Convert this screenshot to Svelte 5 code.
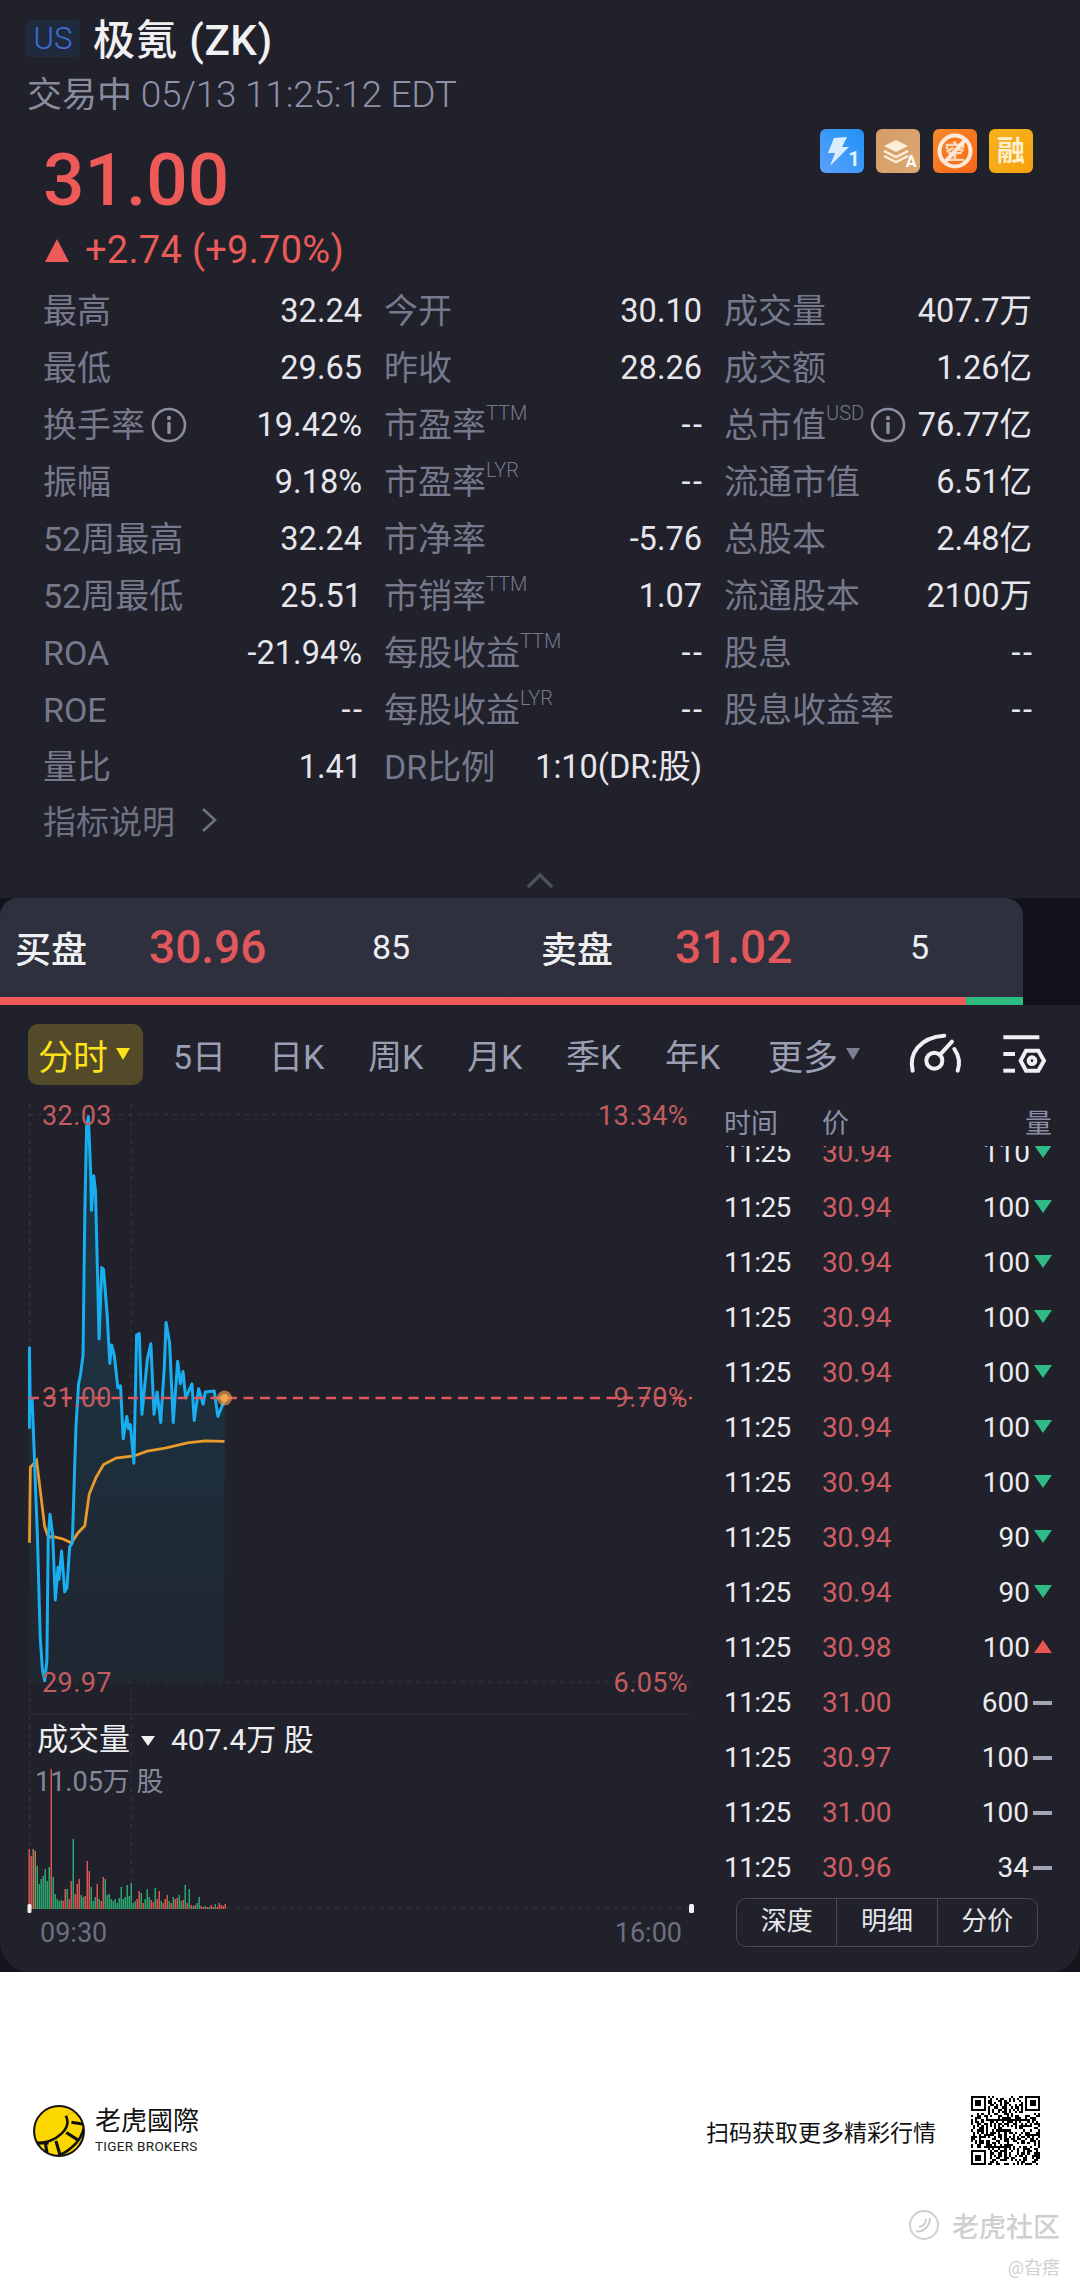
<script>
  const stats = [
    [["最高","32.24"],["今开","30.10"],["成交量","407.7万"]],
    [["最低","29.65"],["昨收","28.26"],["成交额","1.26亿"]],
    [["换手率","19.42%","",true],["市盈率","--","TTM"],["总市值","76.77亿","USD",true]],
    [["振幅","9.18%"],["市盈率","--","LYR"],["流通市值","6.51亿"]],
    [["52周最高","32.24"],["市净率","-5.76"],["总股本","2.48亿"]],
    [["52周最低","25.51"],["市销率","1.07","TTM"],["流通股本","2100万"]],
    [["ROA","-21.94%"],["每股收益","--","TTM"],["股息","--"]],
    [["ROE","--"],["每股收益","--","LYR"],["股息收益率","--"]],
    [["量比","1.41"],["DR比例","1:10(DR:股)"],null]
  ];
  const tabs = ["5日","日K","周K","月K","季K","年K"];
  const trades = [
    ["30.94","110","d"],["30.94","100","d"],["30.94","100","d"],["30.94","100","d"],["30.94","100","d"],
    ["30.94","100","d"],["30.94","100","d"],["30.94","90","d"],["30.94","90","d"],["30.98","100","u"],
    ["31.00","600","n"],["30.97","100","n"],["31.00","100","n"],["30.96","34","n"]
  ];
  const blue = "66,830 66,632 68,790 72,760 76,870 84,1100 90,1340 95,1420 100,1448 105,1400 108,1100 112,1040 118,1090 124,1250 130,1170 132,1200 138,1130 145,1230 150,1220 156,1120 162,1110 170,830 176,720 180,700 186,650 190,300 194,90 198,65 203,200 205,295 210,210 214,250 222,610 228,435 232,440 240,550 246,670 250,625 256,650 264,730 270,725 276,855 284,800 288,830 292,820 300,915 306,600 312,597 318,795 330,660 338,622 345,795 352,740 360,815 368,680 372,570 380,620 388,815 398,665 404,720 410,690 416,755 430,720 435,810 445,732 455,770 460,740 480,738 488,800 503,760";
  const orange = "66,1110 68,925 82,908 90,980 100,1070 108,1095 120,1095 140,1100 160,1110 175,1085 190,1068 200,990 215,950 232,918 260,902 300,897 330,885 370,878 420,865 460,860 503,861";
  const fill = "66,1450 " + blue + " 503,1450";
  const h = [60,53,60,58,43,25,30,33,40,28,42,140,32,15,10,8,9,8,20,20,10,28,70,15,25,30,14,12,13,48,38,22,8,12,25,10,8,32,30,14,15,10,8,10,6,11,22,10,12,24,13,26,6,8,10,18,16,6,10,20,12,9,7,21,10,18,8,6,10,14,8,6,12,10,11,14,8,9,24,6,20,4,3,4,6,12,3,2,3,2,2,4,2,5,2,6,4,3,5];
  const c = "rrttgggggggrgggggrrgrrgrrrggrrrgggrgrrggggggggggggggggrrgrgggrrgrrgrrrgrgrrggrgrgrgrggrrgrgrrgrr";
  const colors = { r: "#d8564f", g: "#2ca56f", t: "#a8805a" };
  const bars = h.map((v, i) => ({ x: 28.5 + i * 2, y: 819 - v, h: v, col: colors[c[i] || "r"] }));

  const N = 33;
  const qr = [];
  let seed = 7;
  const rnd = () => { seed = (seed * 1103515245 + 12345) & 0x7fffffff; return (seed >> 12) & 1; };
  const inFinder = (x, y) => (x < 8 && y < 8) || (x >= N - 8 && y < 8) || (x < 8 && y >= N - 8);
  for (let y = 0; y < N; y++) for (let x = 0; x < N; x++) if (!inFinder(x, y) && rnd()) qr.push([x, y]);
  const finders = [[0, 0], [N - 7, 0], [0, N - 7]];
</script>

<div class="page">
  <div class="panelback">
    <div class="panel">
      <div class="title">
        <span class="us">US</span>
        <span class="name">极氪 (ZK)</span>
      </div>
      <div class="status"><span class="cn">交易中</span> 05/13 11:25:12 EDT</div>
      <div class="pricerow">
        <div>
          <div class="price">31.00</div>
          <div class="change"><span class="up"></span>+2.74 (+9.70%)</div>
        </div>
        <div class="badges">
          <svg width="44" height="44" viewBox="0 0 44 44">
            <defs><linearGradient id="b1" x1="1" y1="0" x2="0" y2="1"><stop offset="0" stop-color="#1f93f5"/><stop offset="1" stop-color="#5aa0fb"/></linearGradient></defs>
            <rect width="44" height="44" rx="6" fill="url(#b1)"/>
            <path d="M14 9 L27 8 L22 18 L29 18 L10 37 L15 24 L8 24 Z" fill="#d8eeff"/>
            <text x="34" y="37" class="bt" font-size="20" fill="#e6f4ff" text-anchor="middle">1</text>
          </svg>
          <svg width="44" height="44" viewBox="0 0 44 44">
            <defs><linearGradient id="b2" x1="0" y1="0" x2="1" y2="1"><stop offset="0" stop-color="#d59c66"/><stop offset="1" stop-color="#dca872"/></linearGradient></defs>
            <rect width="44" height="44" rx="6" fill="url(#b2)"/>
            <path d="M20 11 L32 17 L20 23 L8 17 Z" fill="#fbeeda"/>
            <path d="M8 22 L20 28 L32 22 M8 27 L20 33 L32 27" fill="none" stroke="#fbeeda" stroke-width="2.5"/>
            <text x="35" y="38" class="bt" font-size="16" fill="#fff" text-anchor="middle">A</text>
          </svg>
          <svg width="44" height="44" viewBox="0 0 44 44">
            <defs><linearGradient id="b3" x1="0" y1="0" x2="1" y2="1"><stop offset="0" stop-color="#f48a2a"/><stop offset="1" stop-color="#f9641a"/></linearGradient></defs>
            <rect width="44" height="44" rx="6" fill="url(#b3)"/>
            <text x="22" y="30" class="cjk" font-size="21" fill="#fbd8b8" text-anchor="middle">空</text>
            <circle cx="22" cy="22" r="15.5" fill="none" stroke="#fdeadb" stroke-width="4"/>
            <line x1="12" y1="33" x2="32" y2="11" stroke="#fdeadb" stroke-width="4"/>
          </svg>
          <svg width="44" height="44" viewBox="0 0 44 44">
            <defs><linearGradient id="b4" x1="0" y1="0" x2="1" y2="1"><stop offset="0" stop-color="#f8b31c"/><stop offset="1" stop-color="#f5a010"/></linearGradient></defs>
            <rect width="44" height="44" rx="6" fill="url(#b4)"/>
            <text x="22" y="32" class="cjk" font-size="28" fill="#fff0cf" text-anchor="middle">融</text>
          </svg>
        </div>
      </div>

      <div class="stats">
        {#each stats as row}
          {#each row as cell}
            {#if cell}
              <div class="cell">
                <span class="label">{cell[0]}{#if cell[2]}<sup>{cell[2]}</sup>{/if}{#if cell[3]}<svg class="info" width="36" height="36" viewBox="0 0 36 36"><circle cx="18" cy="18" r="16" fill="none" stroke="#8b8d9f" stroke-width="2.6"/><circle cx="18" cy="11" r="2.2" fill="#8b8d9f"/><rect x="16.3" y="15" width="3.4" height="12" rx="1" fill="#8b8d9f"/></svg>{/if}</span>
                <span class="value" class:dash={cell[1] === "--"}>{cell[1]}</span>
              </div>
            {:else}
              <div></div>
            {/if}
          {/each}
        {/each}
      </div>

      <div class="explain">指标说明
        <svg width="20" height="28" viewBox="0 0 20 28"><path d="M4 3 L16 14 L4 25" fill="none" stroke="#6e7084" stroke-width="2.6"/></svg>
      </div>
      <div class="collapse">
        <svg width="28" height="18" viewBox="0 0 28 18"><path d="M2 16 L14 4 L26 16" fill="none" stroke="#4d4f5e" stroke-width="3.5"/></svg>
      </div>

      <div class="bidwrap">
        <div class="bidbox">
          <div class="side">
            <span class="bl">买盘</span><span class="bp">30.96</span><span class="bq">85</span>
          </div>
          <div class="side sell">
            <span class="bl">卖盘</span><span class="bp">31.02</span><span class="bq">5</span>
          </div>
          <div class="ratio"><div class="rr"></div><div class="rg"></div></div>
        </div>
      </div>

      <div class="tabs">
        <div class="chip">分时<span class="tri yellow"></span></div>
        {#each tabs as t}<span class="tab">{t}</span>{/each}
        <span class="tab more">更多<span class="tri grey"></span></span>
        <svg class="gauge" width="60" height="50" viewBox="50 30 180 150" fill="none" stroke="#f0f0f2" stroke-width="12" stroke-linecap="round">
          <path d="M70 155 C58 105 90 55 165 50"/>
          <circle cx="135" cy="125" r="24"/>
          <line x1="152" y1="107" x2="188" y2="68"/>
          <path d="M195 90 C212 115 212 135 205 155"/>
        </svg>
        <svg class="gear" width="50" height="50" viewBox="330 30 150 150" fill="none" stroke="#f0f0f2" stroke-width="12">
          <line x1="340" y1="55" x2="448" y2="55"/>
          <line x1="340" y1="105" x2="375" y2="105"/>
          <line x1="340" y1="155" x2="375" y2="155"/>
          <path d="M392 125 L408 95 L445 95 L462 125 L445 155 L408 155 Z"/>
          <circle cx="426" cy="125" r="10"/>
        </svg>
      </div>

      <div class="main">
        <svg class="chart" width="700" height="882" viewBox="0 0 700 882">
          <defs>
            <linearGradient id="area" x1="0" y1="0" x2="0" y2="1">
              <stop offset="0" stop-color="#1c3a4c"/>
              <stop offset="1" stop-color="#1f2630"/>
            </linearGradient>
          </defs>
          <g stroke="#34363f" stroke-width="1.2" stroke-dasharray="4 5" fill="none">
            <line x1="29" y1="24.5" x2="690" y2="24.5"/>
            <line x1="29" y1="592" x2="690" y2="592"/>
            <line x1="29.5" y1="14" x2="29.5" y2="818"/>
            <line x1="131" y1="14" x2="131" y2="818"/>
            <line x1="29" y1="818" x2="690" y2="818"/>
          </g>
          <line x1="29" y1="624.5" x2="690" y2="624.5" stroke="#2e3039" stroke-width="1"/>

          <g transform="scale(0.4464 0.408)">
            <polygon points={fill} fill="url(#area)"/>
            <polyline points={orange} fill="none" stroke="#e89a2c" stroke-width="2.8" vector-effect="non-scaling-stroke"/>
            <polyline points={blue} fill="none" stroke="#18aef0" stroke-width="3" stroke-linejoin="round" vector-effect="non-scaling-stroke"/>
          </g>

          <line x1="29" y1="308" x2="692" y2="308" stroke="#e2575c" stroke-width="2.5" stroke-dasharray="10 6.5"/>
          <circle cx="224.5" cy="308" r="7.5" fill="#f0a050" fill-opacity="0.65"/>
          <circle cx="224.5" cy="308" r="4" fill="#f3a24e"/>

          <g class="red">
            <text x="42" y="26">32.03</text>
            <text x="42" y="308">31.00</text>
            <text x="42" y="593">29.97</text>
            <text x="688" y="26" text-anchor="end">13.34%</text>
            <text x="688" y="308" text-anchor="end">9.70%</text>
            <text x="688" y="593" text-anchor="end">6.05%</text>
          </g>

          <text x="37" y="649" class="volt big">成交量</text>
          <path d="M141 646 L155 646 L148 656 Z" fill="#f0f0f2"/>
          <text x="171" y="649" class="volt">407.4万 股</text>
          <text x="35" y="692" class="vols">11.05万 股</text>

          {#each bars as b}
            <rect x={b.x} y={b.y} width="1.5" height={b.h} fill={b.col}/>
          {/each}
          <rect x="27.5" y="814" width="4" height="9" rx="1.5" fill="#f0f0f2"/>
          <rect x="689" y="814" width="5" height="9" rx="1.5" fill="#f0f0f2"/>

          <text x="40" y="843" class="axis">09:30</text>
          <text x="682" y="843" class="axis" text-anchor="end">16:00</text>
        </svg>

        <div class="side-list">
          <div class="thead"><span class="tt">时间</span><span class="tp">价</span><span class="tq">量</span></div>
          <div class="list">
            <div class="scroller">
              {#each trades as t}
                <div class="trow">
                  <span class="tt">11:25</span>
                  <span class="tp red-t">{t[0]}</span>
                  <span class="tq">{t[1]}</span>
                  <span class="mark {t[2]}"></span>
                </div>
              {/each}
            </div>
          </div>
          <div class="segs"><span>深度</span><span>明细</span><span>分价</span></div>
        </div>
      </div>
    </div>
  </div>

  <div class="footer">
    <div class="promo">
      <div class="logo">
        <svg width="54" height="54" viewBox="68 53 104 104">
          <defs><clipPath id="lc"><circle cx="120" cy="105" r="48"/></clipPath></defs>
          <circle cx="120" cy="105" r="48" fill="#fcd700"/>
          <g clip-path="url(#lc)" fill="none">
            <path d="M148 68 C166 104 130 148 60 146" stroke="#111" stroke-width="38"/>
            <path d="M148 68 C166 104 130 148 60 146" stroke="#fcd700" stroke-width="28"/>
            <path d="M60 128 L100 128 M74 130 L78 166 M94 130 L100 166 M114 124 L124 158 M134 108 L156 122 M144 88 L168 92" stroke="#111" stroke-width="6"/>
          </g>
          <circle cx="120" cy="105" r="48" fill="none" stroke="#111" stroke-width="4"/>
        </svg>
        <div class="logotext">
          <div class="lcn">老虎國際</div>
          <div class="len">TIGER BROKERS</div>
        </div>
      </div>
      <div class="scan">
        <span>扫码获取更多精彩行情</span>
        <svg width="69" height="69" viewBox="0 0 33 33" shape-rendering="crispEdges">
          {#each qr as q}<rect x={q[0]} y={q[1]} width="1" height="1" fill="#000"/>{/each}
          {#each finders as f}
            <rect x={f[0] + 0.5} y={f[1] + 0.5} width="6" height="6" fill="none" stroke="#000" stroke-width="1"/>
            <rect x={f[0] + 2} y={f[1] + 2} width="3" height="3" fill="#000"/>
          {/each}
        </svg>
      </div>
    </div>
    <div class="mark-wrap">
      <div class="wm1">
        <svg width="32" height="32" viewBox="0 0 32 32" fill="none" stroke="#cfcfd2" stroke-width="2"><circle cx="16" cy="16" r="14"/><path d="M8 22 C14 24 22 18 22 9 M11 18 C15 18 18 14 18 10"/></svg>
        <span>老虎社区</span>
      </div>
      <div class="wm2">@旮瘩</div>
    </div>
  </div>
</div>

<style>
  :global(body) { margin: 0; background: #fff; }
  .page { width: 1080px; height: 2289px; overflow: hidden; font-family: Roboto, "Noto Sans CJK SC", sans-serif; }
  .panelback { background: #15161c; }
  .panel { background: #20212a; height: 1972px; border-radius: 0 0 30px 30px; overflow: hidden; color: #e8e8ee; }
  .title { display: flex; align-items: center; padding: 10px 0 0 26px; height: 56px; }
  .us { width: 54px; height: 37px; background: #1f2a3e; border-radius: 3px; color: #3f6ed4; font-size: 31px; font-weight: 300; text-align: center; line-height: 37px; }
  .name { margin-left: 13px; font-size: 42px; font-weight: 500; color: #f1f1f3; letter-spacing: 0.6px; margin-top: -3px; }
  .status { height: 44px; line-height: 58px; padding-left: 27px; color: #8d90a8; font-size: 37px; letter-spacing: -0.25px; font-weight: 300; white-space: nowrap; }
  .status .cn { font-weight: 400; letter-spacing: 0; font-size: 35px; color: #8a8c9e; }
  .pricerow { display: flex; justify-content: space-between; padding: 33px 47px 0 43px; height: 134px; }
  .price { font-size: 73px; line-height: 74px; font-weight: 500; color: #ee5a58; }
  .change { display: flex; align-items: center; margin: 13px 0 0 2px; height: 40px; color: #e85b58; font-size: 38px; letter-spacing: 0.3px; white-space: nowrap; }
  .up { width: 0; height: 0; border-left: 12px solid transparent; border-right: 12px solid transparent; border-bottom: 23px solid #ee5a58; margin-right: 16px; }
  .badges { display: flex; gap: 12.5px; margin-top: -14px; height: 44px; }
  .bt { font-family: Roboto, sans-serif; font-weight: 700; }
  .cjk { font-family: "Noto Sans CJK SC", sans-serif; font-weight: 700; }
  .stats { display: grid; grid-template-columns: 319px 318px 308px; column-gap: 22px; padding-left: 43px; grid-auto-rows: 57.1px; margin-top: 5px; }
  .cell { display: flex; justify-content: space-between; align-items: center; white-space: nowrap; }
  .label { display: flex; align-items: center; color: #76788c; font-size: 34px; height: 44px; line-height: 44px; }
  .label sup { font-size: 20px; line-height: 1; align-self: flex-start; margin-top: 0; font-weight: 300; }
  .info { margin-left: 6px; }
  .value { font-size: 32.5px; color: #e6e6ec; line-height: 44px; }
  .dash { letter-spacing: 2.5px; margin-right: -2.5px; }
  .explain { display: flex; align-items: center; gap: 24px; height: 44px; padding-left: 43px; margin-top: 2px; font-size: 33px; color: #6e7084; }
  .collapse { display: flex; justify-content: center; height: 56px; padding-top: 29px; box-sizing: border-box; }
  .bidwrap { background: #12131a; height: 107px; }
  .bidbox { position: relative; width: 1023px; height: 107px; background: #2e303d; border-radius: 18px 18px 0 0; display: flex; overflow: hidden; }
  .side { width: 510px; display: flex; align-items: center; height: 99px; padding-left: 15px; box-sizing: border-box; }
  .side.sell { width: 513px; padding-left: 30px; border-left: 1px solid #323442; }
  .bl { font-size: 36px; font-weight: 500; color: #f0f0f2; width: 134px; flex: none; }
  .bp { font-size: 46px; font-weight: 500; color: #e2575c; width: 223px; flex: none; }
  .sell .bp { width: 235px; }
  .bq { font-size: 34px; color: #eeeef2; }
  .ratio { position: absolute; left: 0; right: 0; bottom: 0; height: 8px; display: flex; }
  .rr { flex: 1; background: #f05a57; }
  .rg { width: 57px; background: #2dbb81; }
  .tabs { display: flex; align-items: center; height: 85px; padding: 14px 0 0 28px; box-sizing: border-box; color: #9c9fb3; }
  .chip { display: flex; align-items: center; width: 115px; height: 61px; background: #524a28; border-radius: 10px; color: #ffe11a; font-size: 35px; padding-left: 10px; box-sizing: border-box; flex: none; }
  .tri { display: inline-block; width: 0; height: 0; border-left: 7px solid transparent; border-right: 7px solid transparent; margin-left: 8px; }
  .tri.yellow { border-top: 12px solid #ffe11a; }
  .tri.grey { border-top: 12px solid #7c7f92; }
  .tab { width: 99px; font-size: 34px; flex: none; }
  .chip + .tab { margin-left: 30px; width: 96px; }
  .tab.more { display: flex; align-items: center; width: auto; font-size: 35px; margin-left: 4px; }
  .gauge { margin-left: 46px; flex: none; }
  .gear { margin-left: 34px; flex: none; }
  .main { display: flex; height: 882px; }
  .chart { flex: none; display: block; }
  .red text { fill: #c25c60; font-size: 27px; dominant-baseline: central; font-weight: 400; letter-spacing: 0.4px; font-family: Roboto, sans-serif; }
  .volt { fill: #eeeef1; font-size: 30px; dominant-baseline: central; font-family: Roboto, "Noto Sans CJK SC", sans-serif; }
  .volt.big { font-size: 31px; }
  .vols { fill: #868899; font-size: 27px; dominant-baseline: central; font-family: Roboto, "Noto Sans CJK SC", sans-serif; }
  .axis { fill: #6d6f80; font-size: 27px; dominant-baseline: central; font-family: Roboto, sans-serif; }
  .side-list { width: 380px; padding-left: 24px; box-sizing: border-box; }
  .thead { display: flex; align-items: center; height: 56px; padding: 12px 28px 0 0; box-sizing: border-box; color: #8b8ea4; font-size: 27px; line-height: 34px; }
  .thead .tt { width: 98px; }
  .thead .tq { margin-left: auto; }
  .list { height: 739px; overflow: hidden; }
  .scroller { margin-top: -20.5px; }
  .trow { display: flex; align-items: center; height: 55px; font-size: 28px; color: #ececf0; }
  .trow .tt { width: 98px; letter-spacing: -0.6px; }
  .red-t { color: #cd5d62; letter-spacing: -0.2px; }
  .trow .tq { margin-left: auto; }
  .mark { width: 19px; margin: 0 28px 0 4px; flex: none; height: 0; }
  .mark.d { border-left: 9.5px solid transparent; border-right: 9.5px solid transparent; border-top: 13px solid #2fbb85; width: 0; margin-bottom: 2px; }
  .mark.u { border-left: 9.5px solid transparent; border-right: 9.5px solid transparent; border-bottom: 13px solid #e85650; width: 0; margin-bottom: 2px; }
  .mark.n { height: 4px; background: #a3a5b6; margin-bottom: 0; }
  .segs { display: flex; width: 302px; height: 49px; margin: 13px 0 0 12px; border: 1.5px solid #484a56; border-radius: 10px; box-sizing: border-box; }
  .segs span { flex: 1; text-align: center; font-size: 26px; line-height: 45px; color: #e6e6ea; }
  .segs span + span { border-left: 1.5px solid #484a56; }
  .footer { background: #fff; height: 317px; }
  .promo { display: flex; justify-content: space-between; align-items: center; padding: 124px 40px 0 32px; height: 69px; }
  .logo { display: flex; align-items: center; gap: 9px; }
  .logotext { color: #111; }
  .lcn { font-size: 26px; font-weight: 400; line-height: 30px; }
  .len { font-size: 13.5px; line-height: 20px; letter-spacing: 0.3px; color: #222; }
  .scan { display: flex; align-items: center; gap: 35px; font-size: 23px; color: #111; }
  .mark-wrap { padding: 44px 20px 0 0; display: flex; flex-direction: column; align-items: flex-end; color: #cfcfd2; }
  .wm1 { display: flex; align-items: center; gap: 12px; font-size: 27px; font-weight: 500; height: 32px; }
  .wm2 { font-size: 18px; margin-top: 12px; }
</style>
